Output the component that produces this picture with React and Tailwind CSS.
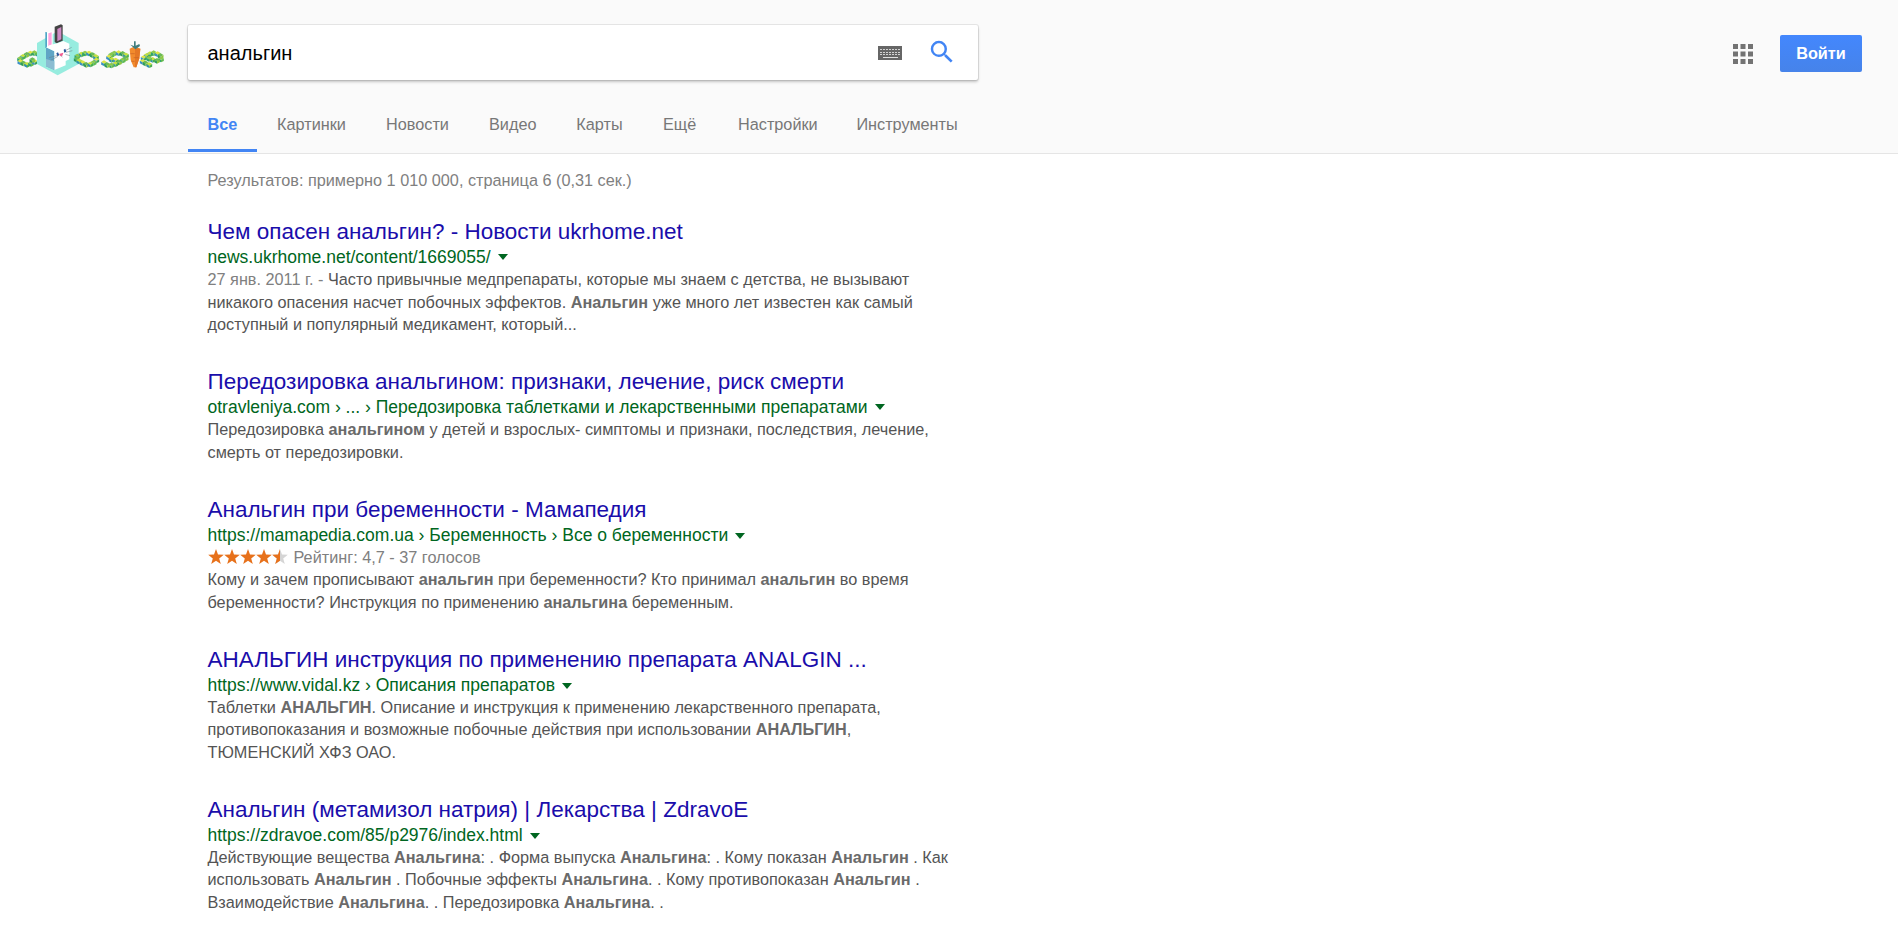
import React from "react";

const Cube = ({ x, y, c = 0 }) => {
  const tops = ["#c3e03e", "#8dca4c", "#dde545", "#6dbb52"];
  const lefts = ["#2f8fae", "#2fa370", "#3a8fc4", "#2f9a5c"];
  const rights = ["#48b04c", "#62bb50", "#3aa35a", "#8cc63f"];
  return (
    <g transform={`translate(${x} ${y})`}>
      <path d="M-8.5 -4L0 -9L8.5 -4L0 1Z" fill={tops[c % 4]} />
      <path d="M-8.5 -4L0 1V8L-8.5 4Z" fill={lefts[c % 4]} />
      <path d="M8.5 -4L0 1V8L8.5 4Z" fill={rights[c % 4]} />
    </g>
  );
};

const cubes = [
  // G
  [115, 133], [103, 130], [91, 131], [80, 135], [69, 141], [60, 148], [61, 157], [70, 161], [81, 165], [93, 162], [104, 157], [97, 151],
  // o
  [244, 134], [255, 131], [267, 131], [278, 136], [288, 142], [232, 140], [289, 152], [230, 149], [238, 155], [281, 159], [248, 160], [259, 165], [271, 164],
  // g
  [343, 131], [356, 130], [368, 132], [378, 137], [334, 136], [327, 143], [377, 146], [335, 150], [368, 152], [347, 152], [357, 158], [346, 163], [334, 167], [312, 160], [322, 166],
  // e
  [450, 133], [461, 130], [473, 133], [482, 139], [440, 138], [483, 149], [431, 145], [471, 153], [458, 150], [447, 147], [428, 156], [437, 161], [448, 166],
];

const Logo = () => (
  <svg viewBox="0 0 540 240" className="h-20 w-[180px] shrink-0">
    {cubes.slice(0, 12).map(([x, y], i) => <Cube key={i} x={x} y={y} c={i} />)}
    <path d="M173 64L236 99V162L173 196L111 162V99Z" fill="#97ecdf" />
    <path d="M136 66L141 67V114H136Z" fill="#4da5c6" />
    <path d="M141 67L158 64V106L141 114Z" fill="#fff" />
    <path d="M145 70L155 67V104L145 108Z" fill="#ffa3de" />
    <path d="M164 50L183 43L188 46V92L170 100L164 96Z" fill="#444" />
    <path d="M172 57L184 51V88L172 94Z" fill="#cf8ac5" />
    <path d="M138 112L163 124V180L138 169Z" fill="#60a5c5" />
    <path d="M138 112L150 105L172 100L190 93L208 101V148L197 153V166L163 180V124Z" fill="#fff" />
    <path d="M138 147L163 154V180L138 169Z" fill="#8bbdd2" />
    <path d="M169 130L174 127L178 136L172 139ZM191 119L196 116L199 125L193 128Z" fill="#28599b" />
    <path d="M177 132L190 128L187 137L182 139Z" fill="#f35b92" />
    <path d="M183 137L187 142M173 136L147 143M174 139L152 151M198 121L215 112M198 127L217 122M196 133L210 137" stroke="#6b7a86" strokeWidth="1.6" fill="none" />
    {cubes.slice(12).map(([x, y], i) => <Cube key={i} x={x} y={y} c={i} />)}
    <path d="M389 116L404 109L421 116L418 145L409 172H401L392 150Z" fill="#f28b2d" />
    <path d="M405 114L421 116L418 145L409 172H405Z" fill="#e47725" />
    <path d="M391 131H404M401 143H417M394 154H404" stroke="#c96324" strokeWidth="2" />
    <path d="M391 104L402 108V94H407V107L418 102L420 108L406 118Z" fill="#3f7d7d" />
  </svg>
);

const Keyboard = () => (
  <svg viewBox="0 0 24 14" className="h-3.5 w-6" shapeRendering="crispEdges">
    <path d="M0 0H24V14H0Z" fill="#666" />
    {[3, 6, 8].map((y) =>
      [3, 6, 9, 12, 15, 18, 21].map((x) => <rect key={`${x}-${y}`} x={x - 1} y={y} width="2" height="1" fill="#d2d2d2" />)
    )}
    <path d="M5 11H20V12H5Z" fill="#e0e0e0" />
  </svg>
);

const Search = () => (
  <svg viewBox="0 0 24 24" className="h-[30px] w-[30px]" fill="#4285f4">
    <path d="M15.5 14h-.79l-.28-.27A6.47 6.47 0 0 0 16 9.5 6.5 6.5 0 1 0 9.5 16c1.61 0 3.09-.59 4.23-1.57l.27.28v.79l5 4.99L20.49 19l-4.99-5zm-6 0C7.01 14 5 11.99 5 9.5S7.01 5 9.5 5 14 7.01 14 9.5 11.99 14 9.5 14z" />
  </svg>
);

const Star = ({ half }) => (
  <svg viewBox="0 0 16 16" className="h-4 w-4">
    <path d="M8 0L10 5.6L15.8 5.8L11.2 9.4L12.8 15L8 11.8L3.2 15L4.8 9.4L.2 5.8L6 5.6Z" fill={half ? "#d5d5d5" : "#e7711b"} />
    {half && <path d="M8 0V11.8L3.2 15L4.8 9.4L.2 5.8L6 5.6Z" fill="#e7711b" />}
  </svg>
);

const B = ({ children }) => <b className="font-bold text-[#6a6a6a]">{children}</b>;

const results = [
  {
    title: "Чем опасен анальгин? - Новости ukrhome.net",
    url: "news.ukrhome.net/content/1669055/",
    lines: [
      <><span className="text-[#808080]">27 янв. 2011 г. - </span>Часто привычные медпрепараты, которые мы знаем с детства, не вызывают</>,
      <>никакого опасения насчет побочных эффектов. <B>Анальгин</B> уже много лет известен как самый</>,
      <>доступный и популярный медикамент, который...</>,
    ],
  },
  {
    title: "Передозировка анальгином: признаки, лечение, риск смерти",
    url: "otravleniya.com › ... › Передозировка таблетками и лекарственными препаратами",
    lines: [
      <>Передозировка <B>анальгином</B> у детей и взрослых- симптомы и признаки, последствия, лечение,</>,
      <>смерть от передозировки.</>,
    ],
  },
  {
    title: "Анальгин при беременности - Мамапедия",
    url: "https://mamapedia.com.ua › Беременность › Все о беременности",
    rating: "Рейтинг: 4,7 - 37 голосов",
    lines: [
      <>Кому и зачем прописывают <B>анальгин</B> при беременности? Кто принимал <B>анальгин</B> во время</>,
      <>беременности? Инструкция по применению <B>анальгина</B> беременным.</>,
    ],
  },
  {
    title: "АНАЛЬГИН инструкция по применению препарата ANALGIN ...",
    url: "https://www.vidal.kz › Описания препаратов",
    lines: [
      <>Таблетки <B>АНАЛЬГИН</B>. Описание и инструкция к применению лекарственного препарата,</>,
      <>противопоказания и возможные побочные действия при использовании <B>АНАЛЬГИН</B>,</>,
      <>ТЮМЕНСКИЙ ХФЗ ОАО.</>,
    ],
  },
  {
    title: "Анальгин (метамизол натрия) | Лекарства | ZdravoE",
    url: "https://zdravoe.com/85/p2976/index.html",
    lines: [
      <>Действующие вещества <B>Анальгина</B>: . Форма выпуска <B>Анальгина</B>: . Кому показан <B>Анальгин</B> . Как</>,
      <>использовать <B>Анальгин</B> . Побочные эффекты <B>Анальгина</B>. . Кому противопоказан <B>Анальгин</B> .</>,
      <>Взаимодействие <B>Анальгина</B>. . Передозировка <B>Анальгина</B>. .</>,
    ],
  },
];

const tabs = [
  ["Картинки", "w-[109px]"], ["Новости", "w-[103px]"], ["Видео", "w-[87.3px]"], ["Карты", "w-[86.7px]"],
  ["Ещё", "w-[75px]"], ["Настройки", "w-[118.4px]"], ["Инструменты", "w-[120px]"],
];

export default function App() {
  return (
    <div className="h-[941px] overflow-hidden bg-white font-['Liberation_Sans',Arial,sans-serif] text-[16.25px] whitespace-nowrap">
      <header className="h-[154px] border-b border-[#e5e5e5] bg-[#fafafa]">
        <div className="flex h-[100px] items-start pt-2.5">
          <Logo />
          <div className="mt-[15px] ml-2 flex h-[55px] w-[790px] items-center rounded-[2px] bg-white pr-[21px] pl-[19.5px] shadow-[0_2px_3px_rgba(0,0,0,0.22),0_0_0_1px_rgba(0,0,0,0.08)]">
            <span className="grow text-[20px] text-black">анальгин</span>
            <Keyboard />
            <span className="ml-[25px] -mt-[2px]"><Search /></span>
          </div>
          <div className="grow" />
          <svg viewBox="0 0 20 20" className="mt-[34px] mr-[27px] h-5 w-5" fill="#737373">
            {[0, 7.5, 15].map((y) => [0, 7.5, 15].map((x) => <rect key={`${x}-${y}`} x={x} y={y} width="5" height="5" />))}
          </svg>
          <button className="mt-[25px] mr-9 h-[37px] w-[82px] rounded-[2px] bg-linear-to-b from-[#4387fd] to-[#4683ea] text-[16.25px] font-bold text-white">Войти</button>
        </div>
        <nav className="flex h-[52px] pl-[188px] leading-[49px] text-[#777]">
          <span className="mr-5 w-[69px] border-b-[3px] border-[#4285f4] pl-[19.5px] font-bold text-[#4285f4]">Все</span>
          {tabs.map(([t, w]) => <span key={t} className={w}>{t}</span>)}
        </nav>
      </header>
      <main className="pl-[207.5px]">
        <div className="h-[64.7px] pt-[13.5px] leading-[24px] text-[#808080]">Результатов: примерно 1 010 000, страница 6 (0,31 сек.)</div>
        {results.map((r, n) => (
          <article key={r.title} className="mb-[32.7px] leading-[22.5px] text-[#545454]">
            <h3 className={`pb-[1.3px] text-[22.5px] leading-[26px] text-[#1a0dab] ${n > 1 ? "pt-px" : ""}`}>{r.title}</h3>
            <div className={`flex items-center text-[17.5px] text-[#006621] ${n > 1 ? "-mb-px" : ""}`}>
              <span>{r.url}</span>
              <svg viewBox="0 0 10 6" className="ml-[7px] h-1.5 w-2.5"><path d="M0 0H10L5 6Z" fill="#006621" /></svg>
            </div>
            {r.rating && (
              <div className="flex items-center text-[#808080]">
                <span className="mr-1.5 -mt-px flex"><Star /><Star /><Star /><Star /><Star half /></span>
                <span>{r.rating}</span>
              </div>
            )}
            {r.lines.map((l, i) => <div key={i}>{l}</div>)}
          </article>
        ))}
      </main>
    </div>
  );
}
